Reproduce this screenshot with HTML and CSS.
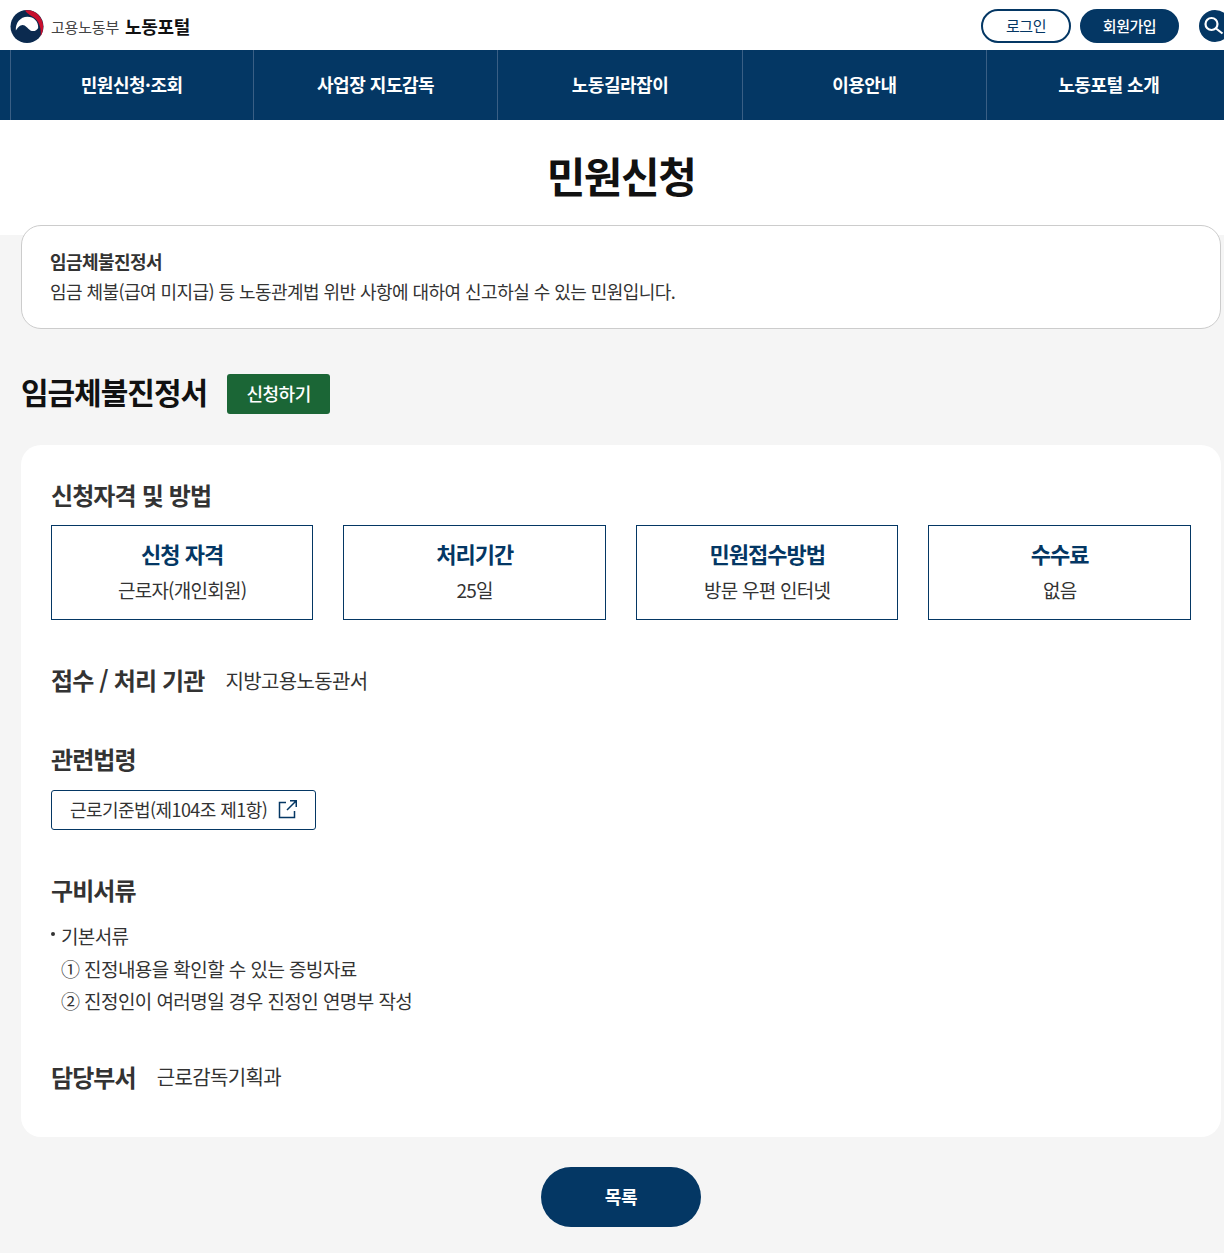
FILE: index.html
```html
<!DOCTYPE html>
<html lang="ko">
<head>
    <meta charset="UTF-8">
    <meta name="viewport" content="width=device-width, initial-scale=1.0">
    <title>민원신청</title>
    <link rel="stylesheet" href="styles.css">
</head>
<body>
    <div class="page">
        <header class="top-bar">
            <a href="#" class="logo">
                <svg class="logo-mark" width="34" height="33" viewBox="0 0 34 34">
                    <circle cx="17" cy="17" r="17" fill="#0b2a4f"/>
                    <path d="M5.500 21C5 13.500 10 7 17.500 7c6.500 0 11.500 5 11 11.500-1.500 3-5 4-8 2.500-3-2-5-5.500-8-5.500-3 0-5 3-7 5.500z" fill="#fff"/>
                    <path d="M15 .5C25-1 33.500 7 33.700 17c0 4-1.200 8-2.700 10 1-8-1.500-15-6.500-19-3-2.500-7-3.500-9.500-7.500z" fill="#c8102e"/>
                </svg>
                <span class="logo-org">고용노동부</span>
                <strong class="logo-name">노동포털</strong>
            </a>
            <div class="top-actions">
                <a href="#" class="btn-login">로그인</a>
                <a href="#" class="btn-join">회원가입</a>
                <a href="#" class="btn-search" aria-label="검색">
                    <svg width="24" height="24" viewBox="0 0 24 24" fill="none" stroke="#fff" stroke-width="2.2">
                        <circle cx="8.500" cy="10" r="6"/>
                        <path d="M13 14.500l6.500 5"/>
                    </svg>
                </a>
            </div>
        </header>

        <nav class="main-nav">
            <a href="#">민원신청·조회</a>
            <a href="#">사업장 지도감독</a>
            <a href="#">노동길라잡이</a>
            <a href="#">이용안내</a>
            <a href="#">노동포털 소개</a>
        </nav>

        <div class="title-band">
            <h1>민원신청</h1>
        </div>

        <main class="content">
            <section class="summary">
                <strong>임금체불진정서</strong>
                <p>임금 체불(급여 미지급) 등 노동관계법 위반 사항에 대하여 신고하실 수 있는 민원입니다.</p>
            </section>

            <div class="apply-row">
                <h2>임금체불진정서</h2>
                <a href="#" class="btn-apply">신청하기</a>
            </div>

            <section class="detail-card">
                <h3 class="method-title">신청자격 및 방법</h3>
                <div class="info-grid">
                    <div class="info-box"><h4>신청 자격</h4><p>근로자(개인회원)</p></div>
                    <div class="info-box"><h4>처리기간</h4><p>25일</p></div>
                    <div class="info-box"><h4>민원접수방법</h4><p>방문 우편 인터넷</p></div>
                    <div class="info-box"><h4>수수료</h4><p>없음</p></div>
                </div>

                <div class="inline-row agency-row">
                    <h3>접수 / 처리 기관</h3>
                    <span>지방고용노동관서</span>
                </div>

                <h3 class="law-title">관련법령</h3>
                <a href="#" class="law-link">
                    근로기준법(제104조 제1항)
                    <svg width="20" height="20" viewBox="0 0 20 20" fill="none" stroke="#043764" stroke-width="1.5">
                        <path d="M8 3.500H1.500v15h15V12"/>
                        <path d="M9 11l9-9M12 1.750h6.250V8"/>
                    </svg>
                </a>

                <h3 class="docs-title">구비서류</h3>
                <ul class="docs-list">
                    <li class="docs-head">기본서류</li>
                    <li>① 진정내용을 확인할 수 있는 증빙자료</li>
                    <li>② 진정인이 여러명일 경우 진정인 연명부 작성</li>
                </ul>

                <div class="inline-row dept-row">
                    <h3>담당부서</h3>
                    <span>근로감독기획과</span>
                </div>
            </section>

            <div class="list-action">
                <a href="#" class="btn-list">목록</a>
            </div>
        </main>
    </div>
</body>
</html>
```

FILE: styles.css
```css
html, body {
    margin: 0;
    padding: 0;
    overflow-x: hidden;
    background-color: #f5f5f5;
}
body {
    font-family: "Noto Sans CJK KR", "Noto Sans", sans-serif;
    color: #333;
    letter-spacing: -0.03em;
}
a {
    text-decoration: none;
    color: inherit;
}
h1, h2, h3, h4, p, ul {
    margin: 0;
    padding: 0;
}
.page {
    width: 1242px;
}

/* header */
.top-bar {
    height: 50px;
    background-color: #fff;
    display: flex;
    justify-content: space-between;
    align-items: center;
    padding: 2px 0 0 10px;
    box-sizing: border-box;
}
.logo {
    display: flex;
    align-items: center;
}
.logo-mark {
    margin-right: 7px;
}
.logo-org {
    font-size: 15px;
    letter-spacing: -0.2px;
    color: #444;
    margin-right: 6px;
}
.logo-name {
    font-size: 18px;
    letter-spacing: -0.3px;
    font-weight: 700;
    color: #111;
}
.top-actions {
    display: flex;
    align-items: center;
}
.btn-login, .btn-join {
    height: 34px;
    border-radius: 17px;
    border: 2px solid #043764;
    box-sizing: border-box;
    padding-bottom: 2px;
    display: flex;
    align-items: center;
    justify-content: center;
    font-size: 15px;
}
.btn-login {
    width: 90px;
    color: #043764;
    background-color: #fff;
    margin-right: 9px;
}
.btn-join {
    width: 99px;
    color: #fff;
    background-color: #043764;
    font-weight: 500;
    margin-right: 20px;
}
.btn-search {
    width: 32px;
    height: 32px;
    border-radius: 50%;
    background-color: #043764;
    display: flex;
    align-items: center;
    justify-content: center;
    margin-right: 11px;
}

/* nav */
.main-nav {
    height: 70px;
    background-color: #043764;
    display: flex;
    padding-left: 9.5px;
}
.main-nav a {
    flex: 0 0 244.4px;
    box-sizing: border-box;
    border-right: 1px solid #3a5f85;
    color: #fff;
    font-size: 18px;
    font-weight: 700;
    padding-bottom: 2px;
    display: flex;
    align-items: center;
    justify-content: center;
}
.main-nav a:first-child {
    border-left: 1px solid #3a5f85;
}

/* title */
.title-band {
    height: 115px;
    background-color: #fff;
    display: flex;
    justify-content: center;
    padding-top: 26px;
    box-sizing: border-box;
}
.title-band h1 {
    font-size: 42px;
    letter-spacing: -1.5px;
    line-height: 58px;
    font-weight: 700;
    color: #111;
}

.content {
    width: 1200px;
    margin-left: 20.9px;
}
.summary {
    margin-top: -10px;
    position: relative;
    height: 104px;
    box-sizing: border-box;
    padding: 20px 28px;
    background-color: #fff;
    border: 1px solid #ccc;
    border-radius: 20px;
    font-size: 18px;
    letter-spacing: -0.55px;
    line-height: 30px;
}
.summary strong {
    display: block;
    font-weight: 700;
}
.apply-row {
    display: flex;
    align-items: center;
    margin-top: 45px;
    height: 40px;
}
.apply-row h2 {
    font-size: 30px;
    letter-spacing: -1px;
    line-height: 34px;
    margin-bottom: 7px;
    font-weight: 700;
    color: #111;
    margin-right: 20px;
}
.btn-apply {
    width: 103px;
    height: 40px;
    border-radius: 3px;
    background-color: #1b6636;
    color: #fff;
    font-size: 18px;
    font-weight: 500;
    padding-bottom: 2px;
    box-sizing: border-box;
    display: flex;
    align-items: center;
    justify-content: center;
}

/* card */
.detail-card {
    margin-top: 31px;
    height: 692px;
    box-sizing: border-box;
    padding: 30px;
    background-color: #fff;
    border-radius: 20px;
}
.detail-card h3 {
    font-size: 24px;
    letter-spacing: -0.035em;
    line-height: 40px;
    font-weight: 700;
    color: #333;
}
.info-grid {
    display: grid;
    grid-template-columns: repeat(4, 1fr);
    gap: 30px;
    margin-top: 10px;
}
.info-box {
    height: 95px;
    box-sizing: border-box;
    border: 1px solid #043764;
    text-align: center;
    padding-top: 11px;
}
.info-box h4 {
    font-size: 22px;
    letter-spacing: -0.045em;
    line-height: 32px;
    font-weight: 700;
    color: #043764;
}
.info-box p {
    font-size: 19px;
    letter-spacing: -0.04em;
    line-height: 30px;
    margin-top: 6px;
}
.inline-row {
    display: flex;
    align-items: center;
}
.inline-row span {
    font-size: 20px;
    letter-spacing: -0.65px;
}
.agency-row {
    margin-top: 40px;
}
.agency-row span {
    margin-left: 21px;
}
.law-title {
    margin-top: 39px;
}
.law-link {
    margin-top: 11px;
    width: 265px;
    height: 40px;
    box-sizing: border-box;
    border: 1px solid #043764;
    border-radius: 3px;
    display: flex;
    align-items: center;
    justify-content: space-between;
    padding: 0 17px 2px 18px;
    font-size: 18px;
    letter-spacing: -0.55px;
}
.docs-title {
    margin-top: 40px;
}
.docs-list {
    list-style: none;
    margin-top: 10px;
    font-size: 19px;
    letter-spacing: -0.03em;
    line-height: 32.5px;
    padding-left: 10px;
}
.docs-head {
    position: relative;
}
.docs-head::before {
    content: "";
    position: absolute;
    left: -10px;
    top: 12px;
    width: 4px;
    height: 4px;
    border-radius: 50%;
    background-color: #333;
}
.dept-row {
    margin-top: 39px;
}
.dept-row span {
    margin-left: 21px;
}

.list-action {
    display: flex;
    justify-content: center;
    padding: 30px 0 26px;
}
.btn-list {
    width: 160px;
    height: 60px;
    border-radius: 30px;
    background-color: #043764;
    color: #fff;
    font-size: 18px;
    font-weight: 700;
    padding-bottom: 2px;
    box-sizing: border-box;
    display: flex;
    align-items: center;
    justify-content: center;
}
```
